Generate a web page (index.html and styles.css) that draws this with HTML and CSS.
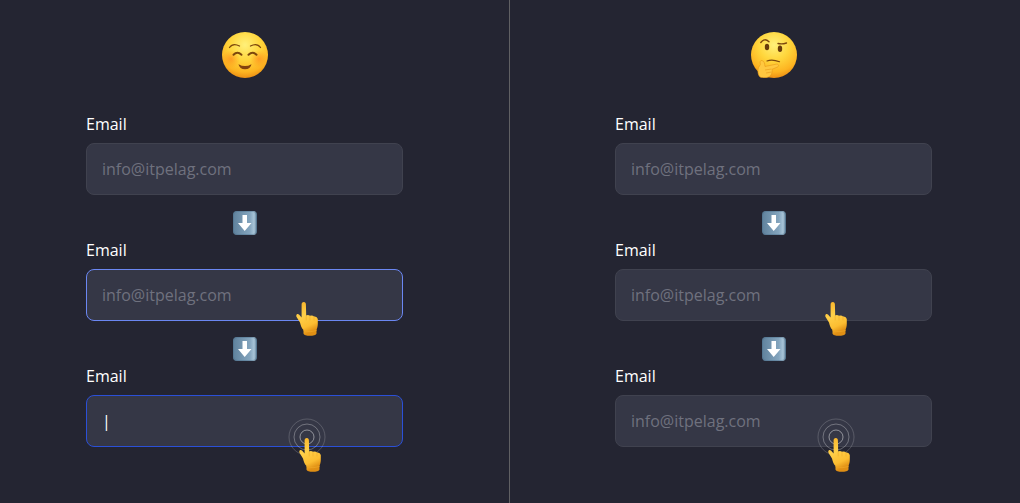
FILE: index.html
```html
<!DOCTYPE html>
<html lang="en">
<head>
  <meta charset="UTF-8" />
  <meta name="viewport" content="width=device-width, initial-scale=1.0"/>
  <title>Input states</title>
  <link rel="stylesheet" href="styles.css">
</head>
<body>

  <!-- shared icons -->
  <svg class="sprite" aria-hidden="true">
    <defs>
      <radialGradient id="face-fill" cx="50%" cy="28%" r="74%">
        <stop offset="0" stop-color="#fff07a"/>
        <stop offset="0.45" stop-color="#ffd63c"/>
        <stop offset="0.8" stop-color="#fdb421"/>
        <stop offset="1" stop-color="#e98a12"/>
      </radialGradient>
      <radialGradient id="cheek-fill">
        <stop offset="0" stop-color="#ff7a18" stop-opacity="0.55"/>
        <stop offset="1" stop-color="#ff8a18" stop-opacity="0"/>
      </radialGradient>
      <linearGradient id="hand-fill" x1="0" y1="0" x2="0.3" y2="1">
        <stop offset="0" stop-color="#f7b025"/>
        <stop offset="0.45" stop-color="#ffd04a"/>
        <stop offset="0.8" stop-color="#fcbd31"/>
        <stop offset="1" stop-color="#e08f14"/>
      </linearGradient>
      <linearGradient id="arrow-fill" x1="0" y1="0" x2="1" y2="0">
        <stop offset="0" stop-color="#5f819c"/>
        <stop offset="0.7" stop-color="#84a5be"/>
        <stop offset="0.88" stop-color="#a9c5d8"/>
        <stop offset="1" stop-color="#567690"/>
      </linearGradient>
    </defs>

    <symbol id="face-smile" viewBox="0 0 46 46">
      <circle cx="23" cy="23" r="23" fill="url(#face-fill)"/>
      <circle cx="9" cy="27" r="9" fill="url(#cheek-fill)"/>
      <circle cx="37" cy="27" r="9" fill="url(#cheek-fill)"/>
      <g fill="none" stroke="#7d480d" stroke-linecap="round">
        <path d="M7.5 15.5Q11 10.5 17.5 14" stroke-width="1.3"/>
        <path d="M28.500 14Q35 10.5 38.500 15.5" stroke-width="1.3"/>
        <path d="M11.5 22.8Q15.3 18.8 19.5 22.8" stroke-width="2"/>
        <path d="M26.5 22.8Q30.7 18.8 34.5 22.8" stroke-width="2"/>
      </g>
      <path d="M16.5 32.2Q23 36 29.5 32.2Q28.5 37.300 23 37.300Q17.5 37.300 16.5 32.2Z" fill="#84430d"/>
    </symbol>

    <symbol id="face-think" viewBox="0 0 46 46">
      <circle cx="23" cy="23" r="23" fill="url(#face-fill)"/>
      <g fill="none" stroke="#7d480d" stroke-linecap="round">
        <path d="M9.8 10.5Q13.500 5.5 18 9.8" stroke-width="1.4"/>
        <path d="M27 11.5Q31 12.5 35.5 11" stroke-width="1.4"/>
        <path d="M16 29Q21 26.8 28.5 29.7" stroke-width="1.2"/>
      </g>
      <ellipse cx="16" cy="15" rx="2.2" ry="3.2" fill="#683b0b"/>
      <ellipse cx="29" cy="16.8" rx="2.2" ry="3.2" fill="#683b0b"/>
      <path d="M11 28.5C9 28.2 8.8 30.2 9.4 32.5L7.5 35.5C6.5 39 6.8 43 9 45C12 46.500 18 46 20 43C21 41 21.5 39 21 37.3L26.5 35C28.5 34 27.5 31.500 25 32.2L14 34.5C13.5 31.5 13.5 29.2 11 28.5Z" fill="#ffc840" stroke="#e8981a" stroke-width="0.6"/>
      <path d="M14 38L20.5 37M15 41L20.500 40" stroke="#e8981a" stroke-width="0.6"/>
    </symbol>

    <symbol id="arrow-down" viewBox="0 0 24 24">
      <rect width="24" height="24" rx="4" fill="url(#arrow-fill)"/>
      <rect x="0.5" y="0.5" width="23" height="23" rx="3.5" fill="none" stroke="#456885" stroke-opacity="0.4"/>
      <path d="M9.5 4h4.500v8h4.500L11.700 20L5 12h4.500Z" fill="#fff"/>
    </symbol>

    <symbol id="hand" viewBox="0 0 22 34">
      <path d="M7.8 0C9.3 0 9.9 1 9.9 2.5L10.2 13.5Q12 12.5 14 13.8Q16.5 12.8 18 14.5Q21 14 21.8 17V22C21.8 25 20.8 26.5 20.5 28.5V31.5C20 34.5 8 34.8 7.5 31.5V28C5.500 26 4.8 23.5 4 20.5L0.6 15C-0.5 12.5 1.5 11.3 3 12.6L5.6 15.5V2.5C5.6 1 6.3 0 7.8 0Z" fill="url(#hand-fill)"/>
      <path d="M10.2 14V18M14 14.2V18M18 15V18" fill="none" stroke="#f0ac28" stroke-width="0.6" stroke-linecap="round"/>
      <path d="M7.5 28.500Q14 31 20.5 28.500" fill="none" stroke="#eda524" stroke-width="0.8"/>
    </symbol>

    <symbol id="ripple" viewBox="0 0 38 38">
      <g fill="none" stroke="#fff">
        <circle cx="19" cy="19" r="7" stroke-opacity="0.45"/>
        <circle cx="19" cy="19" r="13" stroke-opacity="0.3"/>
        <circle cx="19" cy="19" r="18" stroke-opacity="0.18"/>
      </g>
    </symbol>
  </svg>

  <main>
    <section class="panel good">
      <svg class="face" role="img" aria-label="Smiling face"><use href="#face-smile"/></svg>

      <div class="field">
        <label for="good-default">Email</label>
        <input type="email" id="good-default" placeholder="info@itpelag.com" />
      </div>

      <svg class="arrow" aria-hidden="true"><use href="#arrow-down"/></svg>

      <div class="field">
        <label for="good-hover">Email</label>
        <div class="control">
          <input type="email" id="good-hover" class="hovered" placeholder="info@itpelag.com" />
          <svg class="hand" aria-hidden="true"><use href="#hand"/></svg>
        </div>
      </div>

      <svg class="arrow" aria-hidden="true"><use href="#arrow-down"/></svg>

      <div class="field">
        <label for="good-focus">Email</label>
        <div class="control">
          <input type="text" id="good-focus" class="focused" value="|" />
          <svg class="ripple" aria-hidden="true"><use href="#ripple"/></svg>
          <svg class="hand click" aria-hidden="true"><use href="#hand"/></svg>
        </div>
      </div>
    </section>

    <section class="panel bad">
      <svg class="face" role="img" aria-label="Thinking face"><use href="#face-think"/></svg>

      <div class="field">
        <label for="bad-default">Email</label>
        <input type="email" id="bad-default" placeholder="info@itpelag.com" />
      </div>

      <svg class="arrow" aria-hidden="true"><use href="#arrow-down"/></svg>

      <div class="field">
        <label for="bad-hover">Email</label>
        <div class="control">
          <input type="email" id="bad-hover" placeholder="info@itpelag.com" />
          <svg class="hand" aria-hidden="true"><use href="#hand"/></svg>
        </div>
      </div>

      <svg class="arrow" aria-hidden="true"><use href="#arrow-down"/></svg>

      <div class="field">
        <label for="bad-focus">Email</label>
        <div class="control">
          <input type="email" id="bad-focus" placeholder="info@itpelag.com" />
          <svg class="ripple" aria-hidden="true"><use href="#ripple"/></svg>
          <svg class="hand click" aria-hidden="true"><use href="#hand"/></svg>
        </div>
      </div>
    </section>
  </main>

</body>
</html>
```

FILE: styles.css
```css
* {box-sizing: border-box;}
body {margin: 0; font-family: "Open Sans", sans-serif; font-size: 16px; line-height: 22px; background-color: #242532; color: white;}
main {display: grid; grid-template-columns: 1fr 1fr; min-height: 100vh;}
svg {display: block;}
.sprite {position: absolute; width: 0; height: 0;}

.panel {display: flex; flex-direction: column; align-items: center; padding-top: 32px; padding-bottom: 32px;}
.good {padding-left: 86px; padding-right: 106px; border-right: 1px solid #606063;}
.bad {padding-left: 105px; padding-right: 88px;}
.face {width: 46px; height: 46px; margin-bottom: 35px;}
.arrow {width: 24px; height: 24px; margin: 16px 0 4px;}

.field {width: 100%; display: flex; flex-direction: column; gap: 8px;}
.control {position: relative;}
input {display: block; width: 100%; height: 52px; padding: 0 15px; font: inherit; color: white; background-color: #353746; border: 1px solid #40424f; border-radius: 8px; outline: none;}
input::placeholder {color: #6f717e; opacity: 1;}
input:hover, .hovered {border-color: #6b87f2;}
input:focus, .focused {border-color: #2b50d8;}

/* pointer drawn over the input */
.hand {position: absolute; top: 33px; right: 85px; width: 22px; height: 34px;}
.hand.click {top: 43px; right: 82px;}
.ripple {position: absolute; top: 23px; right: 77px; width: 38px; height: 38px;}

@media (max-width: 768px) {
  main {grid-template-columns: 1fr;}
  .good, .bad {padding-left: 32px; padding-right: 32px; border-right: none;}
}
```
